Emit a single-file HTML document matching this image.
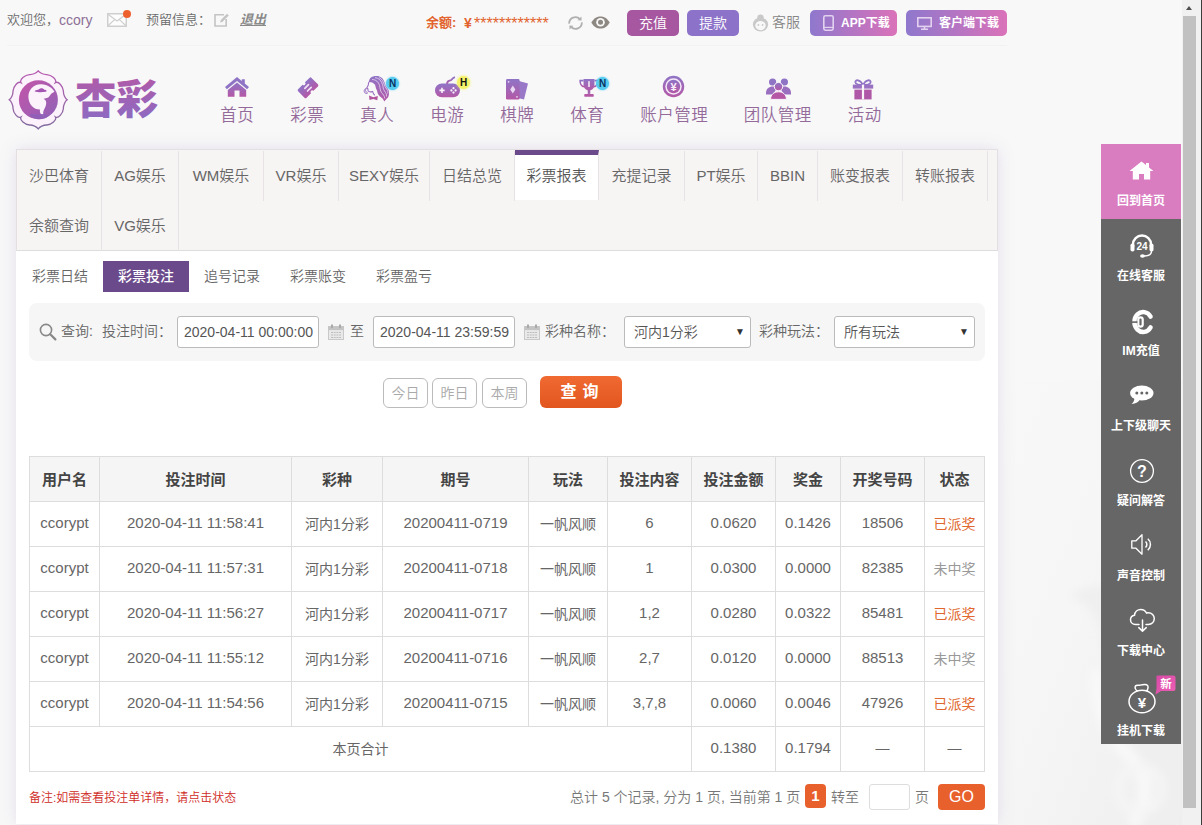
<!DOCTYPE html>
<html lang="zh-CN">
<head>
<meta charset="utf-8">
<title>彩票投注 - 杏彩</title>
<style>
*{box-sizing:border-box;margin:0;padding:0}
html,body{width:1202px;height:825px;overflow:hidden}
body{font-family:"Liberation Sans","Noto Sans CJK SC",sans-serif;font-weight:350;font-size:14px;color:#666;background:#f8f8f8;position:relative}
a{color:inherit;text-decoration:none}
.abs{position:absolute}
/* page background */
#bg{position:absolute;left:0;top:0;width:1182px;height:825px;background:#f8f8f8}
/* top bar */
#topbar{position:absolute;left:0;top:0;width:1182px;height:45px;background:#f8f8f8}
#topbar .line{position:absolute;left:7px;top:45px;width:1000px;height:1px;background:#f2f2f3}
.tt{position:absolute;top:11px;height:18px;line-height:18px;font-size:14px;color:#6b6b6b;white-space:nowrap}
.btn{position:absolute;top:10px;height:26px;line-height:26px;border-radius:5px;color:#fff;font-size:14px;text-align:center;white-space:nowrap}
/* nav */
.nav{position:absolute;top:103px;height:24px;line-height:24px;font-size:16.500px;letter-spacing:.5px;text-indent:.5px;color:#946a9b;white-space:nowrap;text-align:center;transform:translateX(-50%)}
.nico{position:absolute}
.badge{position:absolute;width:13px;height:13px;border-radius:7px;font-size:10px;line-height:13px;text-align:center;color:#0b3260;font-weight:bold;box-shadow:0 0 2px currentColor}
/* panel */
#panel{position:absolute;left:16px;top:149px;width:982px;height:675px;background:#fff;box-shadow:0 0 16px rgba(150,125,185,.2)}
#tabs{position:absolute;left:0;top:0;width:982px;height:102px;background:#f7f4f4;border:1px solid #e3dfe3;border-bottom:1px solid #ddd}
.tab{position:absolute;height:50px;line-height:50px;font-size:15px;color:#666;text-align:center;border-right:1px solid #e6e2e6;white-space:nowrap}
.tab.on{background:#fff;border-top:5px solid #6b4a8c;line-height:41px;color:#555;top:0px !important;height:50px}
.sub{position:absolute;top:112px;height:31px;line-height:31px;font-size:14px;color:#666;text-align:center;white-space:nowrap}
.sub.on{background:#6b4a8c;color:#fff;font-weight:500}
#filter{position:absolute;left:13px;top:154px;width:956px;height:58px;background:#f6f6f6;border-radius:8px}
.fl{position:absolute;top:18px;height:20px;line-height:20px;font-size:14px;color:#666;white-space:nowrap}
.inp{position:absolute;top:13px;height:32px;line-height:30px;border:1px solid #bbb;border-radius:3px;background:#fff;font-size:14px;color:#555;white-space:nowrap;padding-left:6px}
.qb{position:absolute;top:229px;height:30px;line-height:28px;border:1px solid #bbb;border-radius:6px;background:#fff;color:#aaa;font-size:14px;text-align:center;width:45px}
#go{position:absolute;left:524px;top:227px;width:82px;height:32px;line-height:32px;border-radius:6px;background:linear-gradient(#f06a32,#e2561f);color:#fff;font-size:16px;font-weight:bold;text-align:center;letter-spacing:6px;text-indent:3px}
.arr{position:absolute;right:5px;top:0;font-style:normal;font-size:10px;color:#333}
/* table */
table{position:absolute;left:13px;top:307px;width:955px;border-collapse:collapse;table-layout:fixed}
td,th{border:1px solid #ddd;height:45px;text-align:center;font-size:14px;color:#666;font-weight:normal;white-space:nowrap;padding:0}
th{background:#f5f5f5;color:#444;font-weight:bold;font-size:15px;padding-bottom:2px}
td{padding-bottom:2px}
td.n{font-size:15px;padding-bottom:3px}
.win{color:#e0672d}
.lose{color:#999}
/* sidebar */
#side{position:absolute;left:1101px;top:144px;width:80px;height:600px;background:#666}
.si{position:absolute;left:0;width:80px;height:75px;color:#fff;font-size:12px;text-align:center}
.si span{position:absolute;left:0;width:80px;top:48px;line-height:18px;font-weight:bold}
.si svg{position:absolute}
/* scrollbar */
#sb{position:absolute;left:1182px;top:0;width:20px;height:825px;background:#f1f1f1}
#sb .th{position:absolute;left:1px;top:16px;width:13px;height:792px;background:#c1c1c1}
#sb .edge{position:absolute;left:19px;top:0;width:1px;height:825px;background:#3c3c3c}
#sb .up{position:absolute;left:4px;top:6px;width:0;height:0;border-left:3.5px solid transparent;border-right:3.5px solid transparent;border-bottom:4px solid #505050}
#sb .dn{position:absolute;left:4px;top:815px;width:0;height:0;border-left:3.5px solid transparent;border-right:3.5px solid transparent;border-top:4px solid #505050}
</style>
</head>
<body>
<div id="bg"></div>
<svg class="abs" style="left:998px;top:380px" width="184" height="445" viewBox="0 0 184 445"><defs><linearGradient id="wg" x1="0" y1="0" x2="1" y2="1"><stop offset="0" stop-color="#f8f8f8"/><stop offset=".45" stop-color="#f6f6f6"/><stop offset="1" stop-color="#eeeeee"/></linearGradient><filter id="bl" x="-20%" y="-20%" width="140%" height="140%"><feGaussianBlur stdDeviation="5"/></filter></defs><rect x="0" y="0" width="184" height="445" fill="url(#wg)"/><g filter="url(#bl)"><path d="M70 215 C100 225 112 260 104 300 C98 335 112 360 136 380 C156 398 150 425 130 445 L184 445 L184 230 C150 200 100 200 70 215 Z" fill="#efefef"/><path d="M100 290 C96 330 112 358 134 378 C152 396 150 425 134 445" fill="none" stroke="#f9f9f9" stroke-width="12"/><circle cx="142" cy="409" r="22" fill="none" stroke="#f5f5f5" stroke-width="9"/></g></svg>
<div id="topbar"><div class="line"></div>
<div class="tt" style="left:7px;font-size:13px">欢迎您，</div><div class="tt" style="left:59px;font-size:14px;color:#8d7096">ccory</div>
<svg class="abs" style="left:107px;top:13px" width="20" height="14" viewBox="0 0 20 14"><rect x="0.75" y="0.75" width="18.5" height="12.5" fill="#fdfdfd" stroke="#cfcfcf" stroke-width="1.5"/><path d="M1 1.2 L10 8 L19 1.2 M1 12.8 L7.6 6.6 M19 12.8 L12.4 6.6" fill="none" stroke="#cfcfcf" stroke-width="1.2"/></svg>
<div class="abs" style="left:123px;top:10px;width:8px;height:8px;border-radius:4px;background:#ee5f2e"></div>
<div class="tt" style="left:146px;font-size:13px">预留信息：</div>
<svg class="abs" style="left:214px;top:13px" width="16" height="14" viewBox="0 0 16 14"><path d="M10 1.8 H1 V13 H12.2 V6" fill="none" stroke="#c4c4c4" stroke-width="1.6"/><path d="M6 9.6 L6.8 7 L13 0.8 L14.8 2.6 L8.6 8.8 Z" fill="#c4c4c4"/></svg>
<div class="tt" style="left:240px;font-size:13px;color:#8a8a8a;font-style:italic;font-weight:bold;text-decoration:underline">退出</div>
<div class="tt" style="left:426px;top:14px;font-size:13px;color:#e2632e;font-weight:bold">余额:</div>
<div class="tt" style="left:464px;top:14px;color:#e2632e;font-size:14px;font-weight:bold">¥</div>
<div class="tt" style="left:474px;color:#e2632e;font-size:16px;top:15px">************</div>
<svg class="abs" style="left:567px;top:15px" width="17" height="16" viewBox="0 0 17 16"><path d="M2.2 8.6 A6.2 6.2 0 0 1 13 4.2" fill="none" stroke="#b0b0b0" stroke-width="1.8"/><path d="M14.8 7.4 A6.2 6.2 0 0 1 4 11.8" fill="none" stroke="#b0b0b0" stroke-width="1.8"/><path d="M10.6 5.2 L14.6 5.6 L14.4 1.6 Z M6.4 10.8 L2.4 10.4 L2.6 14.4 Z" fill="#b0b0b0"/></svg>
<svg class="abs" style="left:591px;top:16px" width="19" height="13" viewBox="0 0 19 13"><path d="M0.3 6.5 C3 1.8 6.2 0.4 9.5 0.4 C12.8 0.4 16 1.8 18.7 6.5 C16 11.2 12.8 12.6 9.5 12.6 C6.2 12.6 3 11.2 0.3 6.5 Z" fill="#8e8882"/><circle cx="9.5" cy="6.3" r="4.3" fill="#f8f8f8"/><circle cx="9.5" cy="6.3" r="2.5" fill="#8e8882"/></svg>
<div class="btn" style="left:627px;width:52px;background:#a6579f">充值</div>
<div class="btn" style="left:687px;width:52px;background:#8c72c9">提款</div>
<svg class="abs" style="left:752px;top:14px" width="17" height="18" viewBox="0 0 17 18"><circle cx="8.5" cy="3.6" r="3.2" fill="#c9c9c9"/><ellipse cx="8.5" cy="10.5" rx="7.6" ry="7" fill="#c9c9c9"/><ellipse cx="8.5" cy="11.6" rx="5.2" ry="4.6" fill="#f8f8f8"/><circle cx="6.4" cy="11" r="0.9" fill="#c9c9c9"/><circle cx="10.6" cy="11" r="0.9" fill="#c9c9c9"/></svg>
<div class="tt" style="left:772px;top:13px;color:#858585">客服</div>
<div class="btn" style="left:810px;width:87px;background:linear-gradient(90deg,#8f78cd,#da72b9)"></div>
<svg class="abs" style="left:823px;top:15px" width="11" height="16" viewBox="0 0 11 16"><rect x="0.8" y="0.8" width="9.4" height="14.4" rx="1.6" fill="none" stroke="#e2d2f0" stroke-width="1.6"/><path d="M1 12.4 H10" stroke="#e2d2f0" stroke-width="1.2"/></svg>
<div class="tt" style="left:841px;top:14px;color:#fff;font-size:12px;font-weight:bold">APP下载</div>
<div class="btn" style="left:906px;width:101px;background:linear-gradient(90deg,#8f78cd,#da72b9)"></div>
<svg class="abs" style="left:917px;top:17px" width="15" height="13" viewBox="0 0 15 13"><rect x="0.8" y="0.8" width="13.4" height="8.6" fill="none" stroke="#e2d2f0" stroke-width="1.6"/><path d="M4 12.2 H11 M7.5 9.4 V12" stroke="#e2d2f0" stroke-width="1.6"/></svg>
<div class="tt" style="left:939px;top:14px;color:#fff;font-size:12px;font-weight:bold">客户端下载</div>
</div>
<div id="hdr">
<svg width="0" height="0" style="position:absolute"><defs>
<linearGradient id="gp" x1="0" y1="0" x2="0" y2="1"><stop offset="0" stop-color="#b05aa8"/><stop offset="1" stop-color="#8a6cc4"/></linearGradient>
<linearGradient id="gl" x1="0" y1="0" x2="1" y2="1"><stop offset="0" stop-color="#c455a8"/><stop offset="1" stop-color="#8f62b8"/></linearGradient>
<linearGradient id="gi" x1="0" y1="0" x2="0" y2="1"><stop offset="0" stop-color="#8f74c6"/><stop offset="1" stop-color="#b458a6"/></linearGradient>
</defs></svg>
<svg class="abs" style="left:8px;top:70px" width="60" height="60" viewBox="0 0 60 60">
<defs><linearGradient id="gf" x1="0" y1="0" x2="0" y2="1"><stop offset="0" stop-color="#b95cb2"/><stop offset="1" stop-color="#7f6c9e"/></linearGradient></defs>
<path d="M13.0 12.6 C11.2 9.5 17.0 4.9 21.5 4.6 C24.9 4.8 28.8 2.8 30.2 0.8 C31.6 2.8 35.5 4.8 38.9 4.6 C43.4 4.9 49.2 9.5 47.4 12.6 C50.5 10.8 55.1 16.6 55.4 21.1 C55.2 24.5 57.2 28.4 59.2 29.8 C57.2 31.2 55.2 35.1 55.4 38.5 C55.1 43.0 50.5 48.8 47.4 47.0 C49.2 50.1 43.4 54.7 38.9 55.0 C35.5 54.8 31.6 56.8 30.2 58.8 C28.8 56.8 24.9 54.8 21.5 55.0 C17.0 54.7 11.2 50.1 13.0 47.0 C9.9 48.8 5.3 43.0 5.0 38.5 C5.2 35.1 3.2 31.2 1.2 29.8 C3.2 28.4 5.2 24.5 5.0 21.1 C5.3 16.6 9.9 10.8 13.0 12.6 Z" fill="#fbf2fb" stroke="url(#gf)" stroke-width="1.300"/>
<circle cx="30.400" cy="29.800" r="19.500" fill="url(#gl)"/>
<path d="M33.500 14.200 C26 13.600 20.200 19.500 20.400 27 C20.600 34.500 26 40 32.500 39.600 C35 39.400 36.600 38 37.300 36 C37.600 33 37 31 35 29.200 C37.500 28 40 28.500 41.600 26 C43 23.800 44.500 22.500 46.500 21.800 C44.500 17.800 39.500 14.700 33.500 14.200 Z" fill="#fbf2fb"/>
<path d="M26.500 21.200 C28 19.400 30 20.200 31 19.200 C32.500 17.800 35.500 18.200 36.200 19.800 C37.800 19.500 39 20.500 38.500 21.600 C35.500 22.400 30 22.600 26.500 21.200 Z" fill="#a553b2"/>
<path d="M31 29.500 C33.500 28.300 36.500 28.600 37.600 30.500 C39 33 37.800 36.500 36 39.800 C35 41.800 34.800 43.800 36 46.500 C32.300 44.800 31 41.500 32.500 38 C33.800 35 34 32 31 29.500 Z" fill="#fbf2fb"/>
<path d="M21 44.500 C25 43 28.500 45.200 32.500 44.300 C35.500 43.700 38 44.300 40.500 46 C36 50.500 26 50.500 21 44.500 Z" fill="#8f5fb8" opacity=".9"/>
</svg>
<svg class="abs" style="left:72px;top:74px" width="92" height="50" viewBox="0 0 92 50"><text x="3" y="40" font-family="'Liberation Sans','Noto Sans CJK SC',sans-serif" font-size="41" font-weight="900" fill="url(#gp)" textLength="83" lengthAdjust="spacingAndGlyphs">杏彩</text></svg>

<svg class="nico" style="left:224.500px;top:76.500px" width="24" height="20" viewBox="0 0 24 20"><path d="M12 0 L0 10 L1.900 12.300 L12 3.900 L22.100 12.300 L24 10 L19.800 6.500 V2.200 H16.800 V4 Z" fill="#8f74c6"/><path d="M2.800 13 L12 5.400 L21.200 13 V19.700 H14.500 V13.600 H9.500 V19.700 H2.800 Z" fill="url(#gi)"/></svg>
<svg class="nico" style="left:296px;top:76px" width="24" height="24" viewBox="0 0 24 24"><g transform="translate(12 11.800) rotate(-45)"><path d="M-9.500 -4.500 A1.500 1.500 0 0 1 -8 -6 H-1.700 A1.700 1.700 0 0 0 1.700 -6 H8 A1.500 1.500 0 0 1 9.500 -4.500 V4.500 A1.500 1.500 0 0 1 8 6 H1.700 A1.700 1.700 0 0 0 -1.700 6 H-8 A1.500 1.500 0 0 1 -9.500 4.500 Z" fill="url(#gi)"/><path d="M-2.600 -1.900 H2.600 M-2.600 1.900 H2.600" stroke="#f0e2f6" stroke-width="1.700" stroke-linecap="round"/></g></svg>
<svg class="nico" style="left:363px;top:75px" width="28" height="28" viewBox="0 0 28 28"><path d="M6 7 C6 3 9 1 13 1 C17 1 20 3 21 6 C22 8 22 10 23.500 12 C25 14 26.500 16 26 18.500 C25.700 20.500 25.800 21.500 24.500 23 C23.500 24.200 22 25 21.500 26.500 C20.500 25.500 20.500 24.500 19.500 23.500 C18 22 16 21 15 19 C14.200 17.300 14.500 16 13.500 14.500 C12.500 13 12.800 11 11.800 9.500 C10.500 7.800 8.500 7 6 7 Z" fill="url(#gi)"/><path d="M9 4.500 C13 4.500 15.500 7 16.500 10.500 C17.300 13.300 17 15.500 18.500 17.500 C19.800 19.300 21.500 20.500 21.800 23.500 M12 2.600 C16 3 18.500 6 19.500 9.500 C20.300 12.300 20 14 21.500 16 C22.800 17.800 23.800 19 23.500 21.500 M16 2.400 C19 4 20.300 6.500 21 9 C21.600 11 22.500 12.500 23.800 14.300 C24.800 15.700 25 17 24.800 18.500" fill="none" stroke="#eedff5" stroke-width=".75"/><path d="M6 7 C5.200 8.300 5.600 9.600 5 10.800 C4.600 11.600 3.800 12.200 4 12.900 C4.200 13.500 5 13.500 5 14.200 C5 14.900 4.800 15.400 5.300 16 C6.100 17 8 17 9.600 16.400 C10 17.800 10.300 19 11.500 20" fill="none" stroke="#9a6cc0" stroke-width="1.100" stroke-linecap="round"/><path d="M4 13 C2 13.300 0.800 15 1.300 16.800 C1.800 18.600 3.800 18.900 4.800 17.900 M2.600 14.500 C2.200 15.800 2.700 17 3.800 17.200" fill="none" stroke="#9a72c4" stroke-width="1" stroke-linecap="round"/><path d="M6 20.500 L10.300 22.300 L14.800 21 L14.300 25.200 L10.300 23.900 L6.500 24.900 Z" fill="#b2559f"/></svg>
<svg class="nico" style="left:434px;top:75px" width="27" height="23" viewBox="0 0 27 23"><path d="M13 9 C13 5 16 6.4 17.6 4.6 C18.6 3.4 19.6 2.6 21 2.2" fill="none" stroke="url(#gi)" stroke-width="1.8"/><rect x="1" y="8.6" width="25" height="13.6" rx="6.8" fill="url(#gi)"/><path d="M5.4 15.4 H10.6 M8 12.8 V18" stroke="#faf5fb" stroke-width="1.6"/><circle cx="17.4" cy="15.4" r="1.1" fill="#faf5fb"/><circle cx="21.6" cy="15.4" r="1.1" fill="#faf5fb"/><circle cx="19.5" cy="13.2" r="1.1" fill="#faf5fb"/><circle cx="19.5" cy="17.6" r="1.1" fill="#faf5fb"/></svg>
<svg class="nico" style="left:505px;top:78px" width="24" height="23" viewBox="0 0 24 23"><path d="M14 3 L23 5.4 L19 21.6 L14 20.2 Z" fill="#9a78c8"/><rect x="1" y="1" width="13.6" height="20.6" rx="1.4" fill="url(#gi)"/><path d="M7.8 7.4 L10.4 11.4 L7.8 15.4 L5.2 11.4 Z" fill="#e9d6f2"/><circle cx="3.6" cy="3.8" r=".9" fill="#e9d6f2"/><circle cx="12" cy="18.8" r=".9" fill="#e9d6f2"/></svg>
<svg class="nico" style="left:578.500px;top:77.500px" width="20" height="20" viewBox="0 0 22 21"><path d="M5 0.6 H17 V6.6 C17 10.6 14.4 13 11 13 C7.6 13 5 10.6 5 6.6 Z" fill="url(#gi)"/><path d="M5 2.4 H1.2 C1.2 6.6 2.8 8.6 6 9.2 M17 2.4 H20.8 C20.8 6.6 19.2 8.6 16 9.2" fill="none" stroke="url(#gi)" stroke-width="1.7"/><rect x="9.6" y="12.4" width="2.8" height="4.6" fill="#a564b0"/><rect x="5.8" y="17" width="10.4" height="3.2" rx="1" fill="#b458a6"/><rect x="10.1" y="3" width="1.8" height="6.4" fill="#f1e4f6"/></svg>
<svg class="nico" style="left:661.500px;top:75px" width="23" height="23" viewBox="0 0 24 24"><circle cx="12" cy="12" r="11.2" fill="url(#gi)"/><circle cx="12" cy="12" r="8.6" fill="#f4e8f7"/><circle cx="12" cy="12" r="7" fill="url(#gi)"/><text x="12" y="16.4" font-family="'Liberation Sans',sans-serif" font-size="11.5" font-weight="bold" fill="#f8eefa" text-anchor="middle">¥</text></svg>
<svg class="nico" style="left:765px;top:77px" width="27" height="23" viewBox="0 0 27 23"><circle cx="7.6" cy="5" r="3.6" fill="#8f74c6"/><circle cx="19.4" cy="5" r="3.6" fill="#8f74c6"/><path d="M1 16 C1 11.6 4 9.4 7.6 9.4 C9.4 9.4 11 10 12 11 L8 17.6 H1 Z" fill="#9a6fc0"/><path d="M26 16 C26 11.6 23 9.4 19.4 9.4 C17.6 9.4 16 10 15 11 L19 17.6 H26 Z" fill="#9a6fc0"/><circle cx="13.5" cy="9.6" r="4.2" fill="url(#gi)" stroke="#faf7fb" stroke-width="1"/><path d="M5.6 22.4 C5.6 17.4 9 14.8 13.5 14.8 C18 14.8 21.4 17.4 21.4 22.4 Z" fill="#b458a6" stroke="#faf7fb" stroke-width="1"/></svg>
<svg class="nico" style="left:852px;top:78px" width="22" height="22" viewBox="0 0 22 22"><path d="M11 7 C8 1 3 1.4 3.4 4.4 C3.8 6.8 8 7 11 7 C14 7 18.200 6.8 18.600 4.400 C19 1.400 14 1 11 7 Z" fill="none" stroke="#9274c6" stroke-width="1.800"/><rect x="0.8" y="6.6" width="20.4" height="4" fill="#9a70c2"/><rect x="2.400" y="11.600" width="17.200" height="9.800" fill="#b058a8"/><rect x="9.9" y="6.6" width="2.200" height="14.800" fill="#faf7fb"/></svg>

<div class="badge" style="left:386px;top:77px;background:#55cbf0;box-shadow:0 0 2px #55cbf0">N</div>
<div class="badge" style="left:457px;top:76px;background:#f5f26a;color:#111;box-shadow:0 0 3px #f5f26a">H</div>
<div class="badge" style="left:596px;top:77px;background:#55cbf0;box-shadow:0 0 2px #55cbf0">N</div>

<div class="nav" style="left:237px">首页</div>
<div class="nav" style="left:307px">彩票</div>
<div class="nav" style="left:377px">真人</div>
<div class="nav" style="left:447px">电游</div>
<div class="nav" style="left:517px">棋牌</div>
<div class="nav" style="left:587px">体育</div>
<div class="nav" style="left:674px">账户管理</div>
<div class="nav" style="left:777.5px">团队管理</div>
<div class="nav" style="left:864.5px">活动</div>
</div>
<div id="panel">
<div id="tabs">
<div class="tab" style="left:0px;top:1px;width:85px">沙巴体育</div>
<div class="tab" style="left:85px;top:1px;width:77px">AG娱乐</div>
<div class="tab" style="left:162px;top:1px;width:85px">WM娱乐</div>
<div class="tab" style="left:247px;top:1px;width:75px">VR娱乐</div>
<div class="tab" style="left:322px;top:1px;width:91px">SEXY娱乐</div>
<div class="tab" style="left:413px;top:1px;width:85px">日结总览</div>
<div class="tab on" style="left:498px;top:1px;width:84px">彩票报表</div>
<div class="tab" style="left:582px;top:1px;width:86px">充提记录</div>
<div class="tab" style="left:668px;top:1px;width:73px">PT娱乐</div>
<div class="tab" style="left:741px;top:1px;width:60px">BBIN</div>
<div class="tab" style="left:801px;top:1px;width:85px">账变报表</div>
<div class="tab" style="left:886px;top:1px;width:85px">转账报表</div>
<div class="tab" style="left:0px;top:51px;width:85px">余额查询</div>
<div class="tab" style="left:85px;top:51px;width:77px">VG娱乐</div>
</div>
<div class="sub" style="left:1px;width:86px">彩票日结</div>
<div class="sub on" style="left:87px;width:86px">彩票投注</div>
<div class="sub" style="left:173px;width:86px">追号记录</div>
<div class="sub" style="left:259px;width:86px">彩票账变</div>
<div class="sub" style="left:345px;width:86px">彩票盈亏</div>
<div id="filter">
<svg class="abs" style="left:10px;top:20px" width="18" height="18" viewBox="0 0 18 18"><circle cx="7" cy="7" r="5.600" fill="none" stroke="#888" stroke-width="1.600"/><path d="M11.200 11.200 L16.400 16.400" stroke="#888" stroke-width="2.200" stroke-linecap="round"/></svg>
<div class="fl" style="left:32px">查询:</div>
<div class="fl" style="left:73px">投注时间：</div>
<div class="inp" style="left:148px;width:142px">2020-04-11 00:00:00</div>
<svg class="abs" style="left:299px;top:21px" width="16" height="16" viewBox="0 0 16 16"><rect x="0.500" y="2.500" width="15" height="13" fill="#e9e9e9" stroke="#c9c9c9"/><rect x="0.500" y="2.500" width="15" height="3.600" fill="#c4c4c4"/><path d="M3 8.500 H13 M3 11 H13 M3 13.500 H13" stroke="#bdbdbd" stroke-width="1.200" stroke-dasharray="2 .7"/><rect x="3" y="0.500" width="2" height="3.600" fill="#aaa"/><rect x="11" y="0.500" width="2" height="3.600" fill="#aaa"/></svg>
<div class="fl" style="left:321px">至</div>
<div class="inp" style="left:344px;width:142px">2020-04-11 23:59:59</div>
<svg class="abs" style="left:495px;top:21px" width="16" height="16" viewBox="0 0 16 16"><rect x="0.500" y="2.500" width="15" height="13" fill="#e9e9e9" stroke="#c9c9c9"/><rect x="0.500" y="2.500" width="15" height="3.600" fill="#c4c4c4"/><path d="M3 8.500 H13 M3 11 H13 M3 13.500 H13" stroke="#bdbdbd" stroke-width="1.200" stroke-dasharray="2 .7"/><rect x="3" y="0.500" width="2" height="3.600" fill="#aaa"/><rect x="11" y="0.500" width="2" height="3.600" fill="#aaa"/></svg>
<div class="fl" style="left:516px">彩种名称：</div>
<div class="inp" style="left:595px;width:127px;padding-left:9px">河内1分彩<i class="arr">▼</i></div>
<div class="fl" style="left:730px">彩种玩法：</div>
<div class="inp" style="left:805px;width:141px;padding-left:9px">所有玩法<i class="arr">▼</i></div>
</div>
<div class="qb" style="left:367px">今日</div>
<div class="qb" style="left:416px">昨日</div>
<div class="qb" style="left:466px">本周</div>
<div id="go">查询</div>
<table><colgroup><col style="width:70px"><col style="width:192px"><col style="width:91px"><col style="width:146px"><col style="width:79px"><col style="width:84px"><col style="width:84px"><col style="width:65px"><col style="width:84px"><col style="width:60px"></colgroup>
<tr><th>用户名</th><th>投注时间</th><th>彩种</th><th>期号</th><th>玩法</th><th>投注内容</th><th>投注金额</th><th>奖金</th><th>开奖号码</th><th>状态</th></tr>
<tr><td class="n">ccorypt</td><td class="n">2020-04-11 11:58:41</td><td>河内1分彩</td><td class="n">20200411-0719</td><td>一帆风顺</td><td class="n">6</td><td class="n">0.0620</td><td class="n">0.1426</td><td class="n">18506</td><td class="win">已派奖</td></tr>
<tr><td class="n">ccorypt</td><td class="n">2020-04-11 11:57:31</td><td>河内1分彩</td><td class="n">20200411-0718</td><td>一帆风顺</td><td class="n">1</td><td class="n">0.0300</td><td class="n">0.0000</td><td class="n">82385</td><td class="lose">未中奖</td></tr>
<tr><td class="n">ccorypt</td><td class="n">2020-04-11 11:56:27</td><td>河内1分彩</td><td class="n">20200411-0717</td><td>一帆风顺</td><td class="n">1,2</td><td class="n">0.0280</td><td class="n">0.0322</td><td class="n">85481</td><td class="win">已派奖</td></tr>
<tr><td class="n">ccorypt</td><td class="n">2020-04-11 11:55:12</td><td>河内1分彩</td><td class="n">20200411-0716</td><td>一帆风顺</td><td class="n">2,7</td><td class="n">0.0120</td><td class="n">0.0000</td><td class="n">88513</td><td class="lose">未中奖</td></tr>
<tr><td class="n">ccorypt</td><td class="n">2020-04-11 11:54:56</td><td>河内1分彩</td><td class="n">20200411-0715</td><td>一帆风顺</td><td class="n">3,7,8</td><td class="n">0.0060</td><td class="n">0.0046</td><td class="n">47926</td><td class="win">已派奖</td></tr>
<tr><td colspan="6">本页合计</td><td class="n">0.1380</td><td class="n">0.1794</td><td>—</td><td>—</td></tr>
</table>
<div class="abs" style="left:13px;top:641px;font-size:12px;line-height:16px;color:#cf2b25;white-space:nowrap">备注:如需查看投注单详情，请点击状态</div>
<div class="abs" style="left:554px;top:638px;font-size:14px;line-height:20px;color:#777;white-space:nowrap">总计 5 个记录, 分为 1 页, 当前第 1 页</div>
<div class="abs" style="left:789px;top:635px;width:21px;height:24px;line-height:24px;border-radius:4px;background:#e8602c;color:#fff;font-weight:bold;font-size:15px;text-align:center">1</div>
<div class="abs" style="left:815px;top:638px;font-size:14px;line-height:20px;color:#777;white-space:nowrap">转至</div>
<div class="abs" style="left:853px;top:635px;width:41px;height:26px;border:1px solid #ddd;border-radius:3px;background:#fff"></div>
<div class="abs" style="left:899px;top:638px;font-size:14px;line-height:20px;color:#777">页</div>
<div class="abs" style="left:922px;top:635px;width:47px;height:26px;line-height:26px;border-radius:4px;background:#e8602c;color:#fff;font-size:16px;text-align:center">GO</div>
</div>
<div id="side">
<div class="si" style="top:0;background:#d97cc0"><svg style="left:28px;top:17px" width="25" height="19" viewBox="0 0 25 19"><path d="M12.500 0.500 L0.500 10 H3.800 V18.500 H10 V13 H15 V18.500 H21.200 V10 H24.500 L20 6.400 V2 H17 V4 Z" fill="#fff"/></svg><span>回到首页</span></div>
<div class="si" style="top:75px"><svg style="left:28px;top:15px" width="26" height="25" viewBox="0 0 26 25"><path d="M4 13 V10.500 A9 9 0 0 1 22 10.500 V13" fill="none" stroke="#fff" stroke-width="2.400"/><rect x="1.500" y="9.500" width="4" height="8" rx="1.800" fill="#fff"/><rect x="20.500" y="9.500" width="4" height="8" rx="1.800" fill="#fff"/><path d="M22.500 17 C22.500 20.500 19 22 15 22" fill="none" stroke="#fff" stroke-width="1.400"/><ellipse cx="13.500" cy="22" rx="2.400" ry="1.800" fill="#fff"/><text x="13" y="15.500" font-family="'Liberation Sans',sans-serif" font-size="10" font-weight="bold" fill="#fff" text-anchor="middle">24</text></svg><span>在线客服</span></div>
<div class="si" style="top:150px"><svg style="left:29px;top:15px" width="24" height="26" viewBox="0 0 24 26"><path d="M20.600 7.600 A8.800 10 0 1 0 20.600 18.400" fill="none" stroke="#fff" stroke-width="4.400" stroke-linecap="round"/><rect x="8.300" y="8.400" width="4.400" height="9.200" rx="2.200" fill="none" stroke="#fff" stroke-width="2.200"/><rect x="0" y="12.300" width="7.400" height="1.600" fill="#666"/></svg><span>IM充值</span></div>
<div class="si" style="top:225px"><svg style="left:28px;top:16px" width="25" height="20" viewBox="0 0 25 20"><ellipse cx="12.800" cy="8" rx="11.700" ry="7.600" fill="#fff"/><path d="M5.500 12 C5.500 15.500 4.500 17.500 2.500 19 C7 18.800 10 16.800 11 14 Z" fill="#fff"/><circle cx="7.800" cy="8" r="1.500" fill="#666"/><circle cx="12.800" cy="8" r="1.500" fill="#666"/><circle cx="17.800" cy="8" r="1.500" fill="#666"/></svg><span>上下级聊天</span></div>
<div class="si" style="top:300px"><svg style="left:28px;top:14px" width="26" height="26" viewBox="0 0 26 26"><circle cx="13" cy="13" r="11.400" fill="none" stroke="#fff" stroke-width="1.300"/><text x="13" y="18.800" font-family="'Liberation Sans',sans-serif" font-size="16" font-weight="bold" fill="#fff" text-anchor="middle">?</text></svg><span>疑问解答</span></div>
<div class="si" style="top:375px"><svg style="left:29px;top:14px" width="24" height="23" viewBox="0 0 24 23"><path d="M1.800 7.800 H6 L12 1.800 V21.200 L6 15.200 H1.800 Z" fill="none" stroke="#fff" stroke-width="1.300" stroke-linejoin="round"/><path d="M15.500 8.500 A4 4 0 0 1 15.500 14.500" fill="none" stroke="#fff" stroke-width="1.500"/><path d="M17.800 5.800 A7.500 7.500 0 0 1 17.800 17.200" fill="none" stroke="#fff" stroke-width="1.500"/></svg><span>声音控制</span></div>
<div class="si" style="top:450px"><svg style="left:28px;top:14px" width="27" height="26" viewBox="0 0 27 26"><path d="M10 16.500 H6.500 C3.500 16.500 1.500 14.300 1.500 11.800 C1.500 9.300 3.300 7.600 5.500 7.300 C5.800 4 8.500 1.500 11.800 1.500 C14.300 1.500 16.400 2.800 17.500 5 C18.100 4.800 18.700 4.700 19.300 4.700 C22.800 4.700 25.300 7.300 25.300 10.600 C25.300 13.900 22.800 16.500 19.300 16.500 H17" fill="none" stroke="#fff" stroke-width="1.500" stroke-linecap="round"/><path d="M13.500 12 V23 M9.800 19.600 L13.500 23.300 L17.200 19.600" fill="none" stroke="#fff" stroke-width="1.500" stroke-linecap="round" stroke-linejoin="round"/></svg><span>下载中心</span></div>
<div class="si" style="top:525px"><svg style="left:26px;top:14px" width="30" height="31" viewBox="0 0 30 31"><ellipse cx="15" cy="18.500" rx="13" ry="11.300" fill="none" stroke="#fff" stroke-width="1.500"/><path d="M10.500 8.500 C8.500 6.500 7.500 4.500 8.500 3 C9.500 1.500 11.500 2.600 13 2.200 C15 1.600 17.500 0.800 19.800 1.800 C21.800 2.800 21.300 5.500 19.500 8.500" fill="none" stroke="#fff" stroke-width="1.500" stroke-linejoin="round"/><text x="15" y="24.500" font-family="'Liberation Sans',sans-serif" font-size="15" font-weight="bold" fill="#fff" text-anchor="middle">¥</text></svg><svg style="left:53px;top:6px" width="22" height="20" viewBox="0 0 22 20"><defs><linearGradient id="gn" x1="0" y1="0" x2="1" y2="1"><stop offset="0" stop-color="#d94aa8"/><stop offset="1" stop-color="#ee5fb4"/></linearGradient></defs><path d="M3 0.500 H19.500 A2 2 0 0 1 21.500 2.500 V14 A2 2 0 0 1 19.500 16 H7 L1.500 19.500 L2.500 14 V2 A1.500 1.500 0 0 1 3 0.500 Z" fill="url(#gn)"/><text x="12" y="12.800" font-family="'Liberation Sans','Noto Sans CJK SC',sans-serif" font-size="11.500" font-weight="bold" fill="#fff" text-anchor="middle">新</text></svg><span style="top:53px">挂机下载</span></div>
</div>
<div id="sb"><div class="up"></div><div class="th"></div><div class="edge"></div></div>
</body>
</html>
